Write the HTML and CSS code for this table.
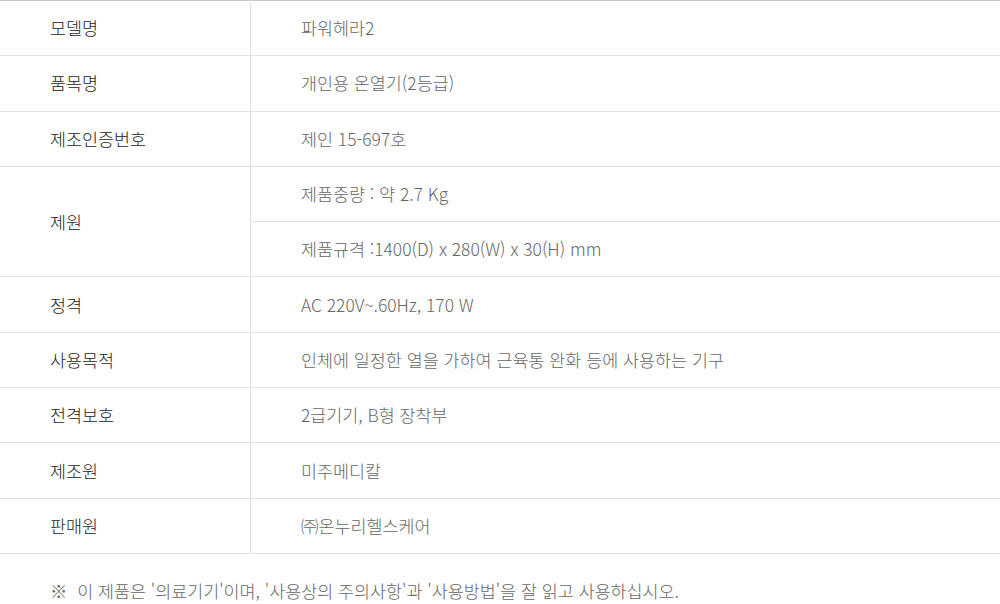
FILE: index.html
```html
<!DOCTYPE html>
<html lang="ko">
<head>
<meta charset="utf-8">
<link rel="stylesheet" href="styles.css">
</head>
<body>
<table class="spec">
  <tr><th>모델명</th><td>파워헤라2</td></tr>
  <tr><th>품목명</th><td>개인용 온열기(2등급)</td></tr>
  <tr><th>제조인증번호</th><td>제인 15-697호</td></tr>
  <tr><th rowspan="2">제원</th><td>제품중량 : 약 2.7 Kg</td></tr>
  <tr><td>제품규격 :1400(D) x 280(W) x 30(H) mm</td></tr>
  <tr><th>정격</th><td>AC 220V~.60Hz, 170 W</td></tr>
  <tr><th>사용목적</th><td>인체에 일정한 열을 가하여 근육통 완화 등에 사용하는 기구</td></tr>
  <tr><th>전격보호</th><td>2급기기, B형 장착부</td></tr>
  <tr><th>제조원</th><td>미주메디칼</td></tr>
  <tr><th>판매원</th><td>㈜온누리헬스케어</td></tr>
</table>
<p class="note">※ &nbsp;이 제품은 '의료기기'이며, '사용상의 주의사항'과 '사용방법'을 잘 읽고 사용하십시오.</p>
</body>
</html>
```
FILE: styles.css
```css
html, body {
  margin: 0;
  padding: 0;
  background: #fff;
}
body {
  font-family: "Noto Sans CJK KR", "Noto Sans", sans-serif;
  font-size: 17.4px;
  width: 1000px;
}
.spec {
  width: 1000px;
  border-collapse: collapse;
  border-top: 1px solid #c4c4c4;
  border-bottom: 1px solid #c4c4c4;
}
.spec th,
.spec td {
  height: 54.3px;
  padding: 0;
  border-bottom: 1px solid #e2e2e2;
  text-align: left;
  vertical-align: middle;
  line-height: 20px;
}
.spec th {
  width: 200px;
  padding-left: 50px;
  font-weight: 300;
  color: #222;
  border-right: 1px solid #e2e2e2;
}
.spec td {
  padding-left: 50px;
  color: #666;
  font-weight: 300;
}
.note {
  margin: 27px 0 0;
  padding-left: 50px;
  color: #666;
  font-weight: 300;
  line-height: 20px;
}
```
